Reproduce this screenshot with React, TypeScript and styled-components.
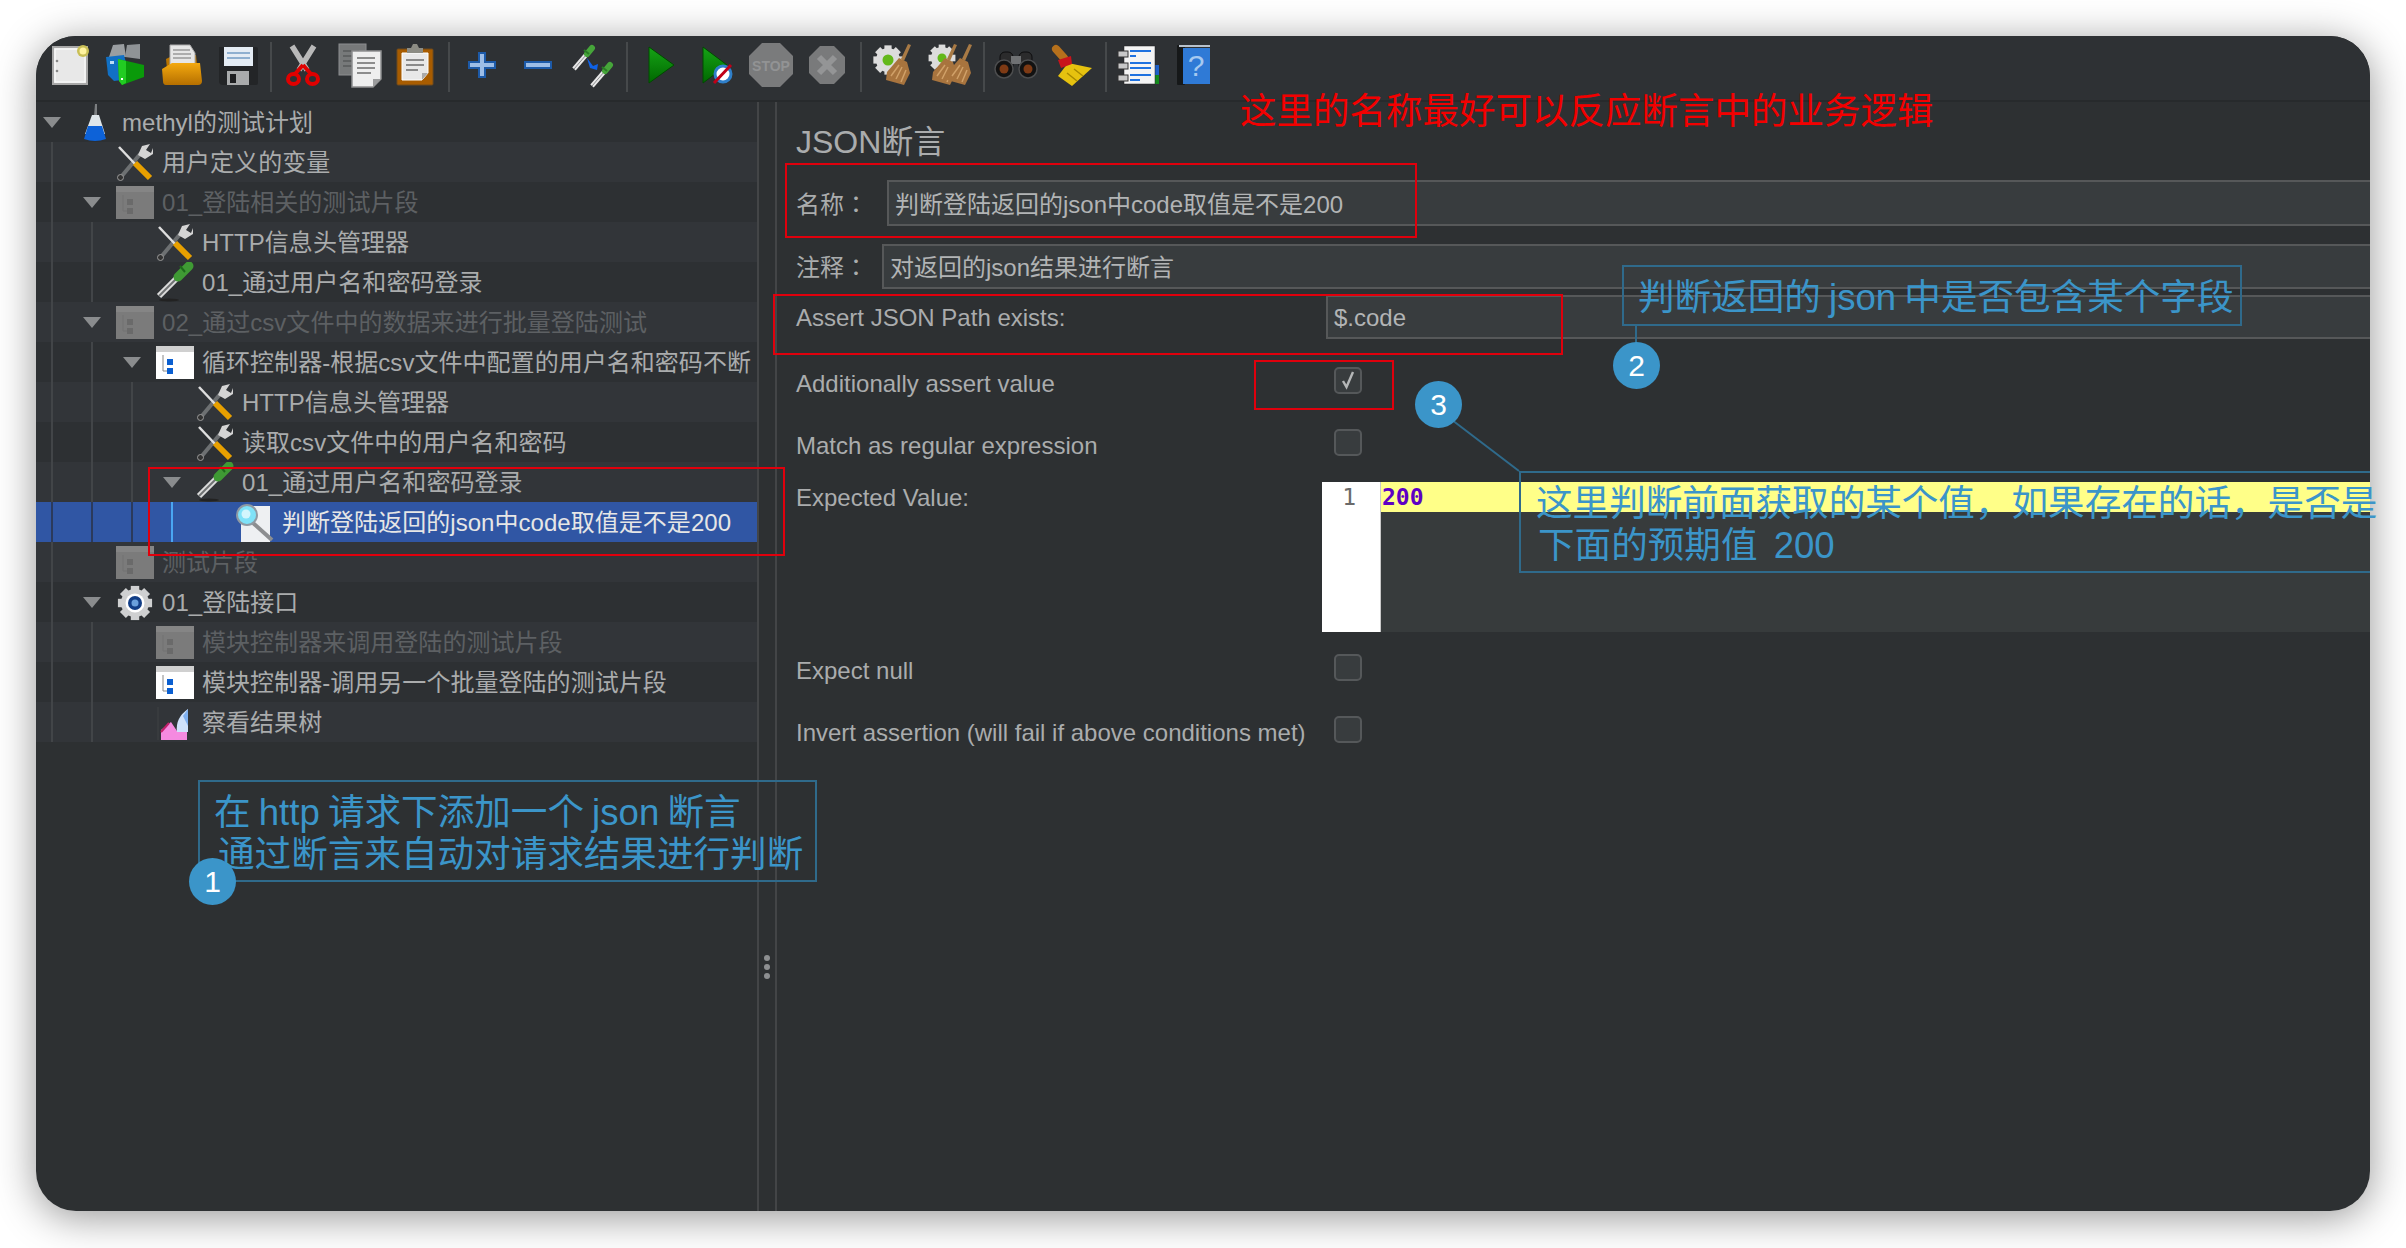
import React from 'react';
import styled, { createGlobalStyle } from 'styled-components';

const GlobalStyle = createGlobalStyle`
  html, body {
    margin: 0;
    padding: 0;
    background: #fff;
    overflow: hidden;
  }
  * {
    box-sizing: border-box;
  }
`;

const SANS = `"Liberation Sans", "Noto Sans CJK SC", sans-serif`;

const Stage = styled.div`
  position: relative;
  width: 2406px;
  height: 1248px;
  padding: 36px 0 0 36px;
  font-family: ${SANS};
  overflow: hidden;
`;

const Window = styled.div`
  width: 2334px;
  height: 1175px;
  display: flex;
  flex-direction: column;
  background: #2d3032;
  border-radius: 40px;
  box-shadow: 0 6px 40px rgba(0, 0, 0, 0.42);
  overflow: hidden;
`;

const Toolbar = styled.div`
  height: 66px;
  flex: none;
  display: flex;
  align-items: center;
  padding: 0 0 6px 6px;
  background: #2e3134;
  border-bottom: 2px solid #272a2c;
`;

const ToolButton = styled.div<{ $w?: number }>`
  width: ${p => p.$w ?? 56}px;
  height: 44px;
  flex: none;
  display: flex;
  justify-content: center;
`;

const ToolSep = styled.div<{ $l: number; $r: number }>`
  width: 2px;
  height: 50px;
  flex: none;
  margin: 4px ${p => p.$r}px 0 ${p => p.$l}px;
  background: #46494b;
`;

const Main = styled.div`
  flex: 1;
  min-height: 0;
  display: flex;
`;

const TreePane = styled.div`
  width: 721px;
  flex: none;
  overflow: hidden;
`;

const Splitter = styled.div`
  width: 20px;
  flex: none;
  display: flex;
  flex-direction: column;
  align-items: center;
  gap: 3px;
  padding-top: 853px;
  border-left: 2px solid #434547;
  border-right: 2px solid #434547;
`;

const SplitDot = styled.span`
  width: 6px;
  height: 6px;
  border-radius: 50%;
  background: #8d8f91;
`;

const Row = styled.div<{ $stripe: boolean; $selected?: boolean }>`
  height: 40px;
  display: flex;
  align-items: center;
  padding-left: 15px;
  white-space: nowrap;
  overflow: hidden;
  background: ${p => (p.$selected ? '#3056a4' : p.$stripe ? '#323539' : '#2d3033')};
`;

const Guide = styled.span<{ $selected?: boolean; $active?: boolean }>`
  width: 40px;
  height: 40px;
  flex: none;
  border-left: 2px solid ${p => (p.$active ? '#4aa6f2' : p.$selected ? '#2b3a5c' : '#424548')};
`;

const Toggle = styled.span`
  width: 20px;
  flex: none;
  margin: 0 13px 0 -9px;
  display: flex;
  justify-content: center;
`;

const Triangle = styled.span`
  width: 0;
  height: 0;
  border-left: 9px solid transparent;
  border-right: 9px solid transparent;
  border-top: 11px solid #8a8c8e;
`;

const NodeIcon = styled.span`
  width: 40px;
  height: 40px;
  flex: none;
  margin-right: 7px;
`;

const NodeText = styled.span<{ $disabled?: boolean; $selected?: boolean }>`
  padding-bottom: 3px;
  font-size: 24px;
  letter-spacing: 0.04px;
  color: ${p => (p.$selected ? '#e6e6e6' : p.$disabled ? '#5d6063' : '#aaacad')};
`;

const FormPane = styled.div`
  flex: 1;
  min-width: 0;
  padding: 22px 0 0 19px;
  color: #aaacad;
  font-size: 24px;
`;

const Title = styled.div`
  height: 36px;
  font-size: 32px;
  line-height: 36px;
`;

const FieldRow = styled.div<{ $top: number; $h: number }>`
  display: flex;
  align-items: center;
  height: ${p => p.$h}px;
  margin-top: ${p => p.$top}px;
`;

const FieldLabel = styled.div<{ $w: number; $shift: number }>`
  width: ${p => p.$w}px;
  flex: none;
  padding-top: ${p => Math.max(0, p.$shift)}px;
  padding-bottom: ${p => Math.max(0, -p.$shift)}px;
`;

const Colon = styled.span`
  font-family: "Noto Sans CJK TC", sans-serif;
`;

const TextInput = styled.div<{ $shift: number }>`
  flex: 1;
  height: 100%;
  display: flex;
  align-items: center;
  padding: ${p => Math.max(0, p.$shift)}px 0 ${p => Math.max(0, -p.$shift)}px 6px;
  background: #383c3e;
  border: 2px solid #565859;
  border-right: none;
  color: #b2b4b5;
`;

const CheckRow = styled.div<{ $top: number }>`
  display: flex;
  align-items: center;
  height: 40px;
  margin-top: ${p => p.$top}px;
`;

const CheckLabel = styled.div`
  width: 538px;
  flex: none;
`;

const CheckBox = styled.div`
  width: 28px;
  height: 27px;
  margin-bottom: 8px;
  display: flex;
  align-items: center;
  justify-content: center;
  background: #383c3e;
  border: 2px solid #55585a;
  border-radius: 5px;
`;

const EditorRow = styled.div`
  display: flex;
  height: 150px;
  margin-top: 16px;
`;

const EditorLabel = styled.div`
  width: 526px;
  flex: none;
  line-height: 32px;
`;

const Gutter = styled.div`
  width: 59px;
  flex: none;
  padding-right: 24px;
  text-align: right;
  background: #fff;
  border-right: 1px solid #c8c8c8;
  color: #6a6a6a;
  font: 23px/30px "DejaVu Sans Mono", monospace;
`;

const CodeArea = styled.div`
  flex: 1;
  background: #373b3c;
`;

const ActiveLine = styled.div`
  height: 30px;
  padding-left: 1px;
  background: #ffff88;
  color: #5e00c4;
  font: bold 23px/30px "DejaVu Sans Mono", monospace;
`;

// annotations drawn over the screenshot
const RedBox = styled.div<{ $x: number; $y: number; $w: number; $h: number }>`
  position: absolute;
  left: ${p => p.$x}px;
  top: ${p => p.$y}px;
  width: ${p => p.$w}px;
  height: ${p => p.$h}px;
  border: 2px solid #e0000c;
  pointer-events: none;
`;

const RedNote = styled.div`
  position: absolute;
  left: 1240px;
  top: 89px;
  font-size: 36.5px;
  line-height: 46px;
  color: #f30000;
  white-space: nowrap;
`;

const BlueBox = styled.div<{ $x: number; $y: number; $w: number; $h: number; $open?: boolean }>`
  position: absolute;
  left: ${p => p.$x}px;
  top: ${p => p.$y}px;
  width: ${p => p.$w}px;
  height: ${p => p.$h}px;
  border: 2px solid #2f6a8b;
  ${p => p.$open && 'border-right: none;'}
`;

const BlueText = styled.div<{ $x: number; $y: number; $gap?: number }>`
  position: absolute;
  left: ${p => p.$x}px;
  top: ${p => p.$y}px;
  font-size: 36.6px;
  line-height: 42px;
  color: #3b95c9;
  white-space: nowrap;
  word-spacing: ${p => p.$gap ?? 0}px;
`;

const Badge = styled.div<{ $x: number; $y: number }>`
  position: absolute;
  left: ${p => p.$x}px;
  top: ${p => p.$y}px;
  width: 47px;
  height: 47px;
  display: flex;
  align-items: center;
  justify-content: center;
  border-radius: 50%;
  background: #3b95c9;
  color: #fff;
  font-size: 30px;
`;

const Leader = styled.svg`
  position: absolute;
  left: 0;
  top: 0;
  pointer-events: none;
`;

const Svg: React.FC<React.PropsWithChildren<{ size?: number }>> = ({ size = 44, children }) => (
  <svg width={size} height={size} viewBox={`0 0 ${size} ${size}`} style={{ overflow: 'visible' }}>
    {children}
  </svg>
);

const NewIcon = () => (
  <Svg>
    <rect x="5" y="4" width="34" height="37" fill="#e4e4e4" stroke="#a8a8a8" strokeWidth="2" />
    <rect x="7" y="6" width="30" height="33" fill="#e8e8e8" stroke="#fff" strokeWidth="1" />
    <circle cx="9" cy="18" r="1.3" fill="#888" />
    <circle cx="9" cy="28" r="1.3" fill="#888" />
    <circle cx="35" cy="8" r="6" fill="#c9bf56" />
    <circle cx="35" cy="8" r="3.5" fill="#fff3a0" />
  </Svg>
);

const TemplatesIcon = () => (
  <Svg>
    <path d="M5 14 L9 2 L20 1 L22 14 Z" fill="#9a9ea1" />
    <path d="M21 14 L23 2 L36 1 L36 16 Z" fill="#8f9396" />
    <path d="M2 14 L20 12 L26 36 L10 38 L4 32 Z" fill="#1170c4" />
    <rect x="6" y="18" width="4" height="3" fill="#bcdcf5" />
    <path d="M14 16 L40 22 L40 34 L18 42 L15 38 Z" fill="#0a9a0a" />
    <path d="M14 16 L22 18 L22 40 L18 42 L15 38 Z" fill="#22cc22" />
    <rect x="17" y="35" width="2" height="2" fill="#fff" />
  </Svg>
);

const OpenIcon = () => (
  <Svg>
    <path d="M6 16 L14 12 L36 12 L38 30 L8 36 Z" fill="#b97400" />
    <path d="M10 2 L30 2 L35 10 L35 24 L10 24 Z" fill="#e6e6e6" stroke="#aaa" strokeWidth="1" />
    <path d="M13 7 H30 M13 11 H31 M13 15 H31" stroke="#999" strokeWidth="1.5" />
    <path d="M2 26 L12 20 L40 20 L42 38 Q42 42 38 42 L6 42 Q3 42 3 38 Z" fill="url(#fold)" />
    <defs>
      <linearGradient id="fold" x1="0" y1="0" x2="0" y2="1">
        <stop offset="0" stopColor="#f4a90f" />
        <stop offset="1" stopColor="#b56f00" />
      </linearGradient>
    </defs>
  </Svg>
);

const SaveIcon = () => (
  <Svg>
    <path d="M3 4 H40 Q42 4 42 6 V40 Q42 42 40 42 H7 Q3 42 3 38 Z" fill="#232527" />
    <rect x="8" y="4" width="29" height="19" fill="#e4ecf4" />
    <path d="M11 10 H34 M11 15 H34" stroke="#8fb0d0" strokeWidth="2" />
    <rect x="11" y="28" width="22" height="14" fill="#a9abac" />
    <rect x="14" y="31" width="6" height="9" fill="#1d1e20" />
  </Svg>
);

const CutIcon = () => (
  <Svg>
    <path d="M11 3 L26 27 M33 3 L18 27" stroke="#b9b9b9" strokeWidth="5.5" />
    <path d="M22 22 L14 31 M22 22 L30 31" stroke="#e00000" strokeWidth="4" />
    <ellipse cx="12.5" cy="36" rx="5.5" ry="5" fill="none" stroke="#e00000" strokeWidth="4" />
    <ellipse cx="31.5" cy="36" rx="5.5" ry="5" fill="none" stroke="#e00000" strokeWidth="4" />
  </Svg>
);

const CopyIcon = () => (
  <Svg>
    <rect x="2" y="1" width="27" height="31" fill="#77797a" stroke="#8c8e8f" />
    <path d="M6 8 H22 M6 13 H22 M6 18 H22 M6 23 H22" stroke="#5f6162" strokeWidth="2" />
    <path d="M15 8 H44 V36 L36 44 H15 Z" fill="#eeeeee" stroke="#8e8f90" strokeWidth="1.5" />
    <path d="M36 44 V36 H44 Z" fill="#9a9b9c" />
    <path d="M20 15 H38 M20 20 H38 M20 25 H38 M20 30 H34" stroke="#8c8c8c" strokeWidth="2" />
  </Svg>
);

const PasteIcon = () => (
  <Svg>
    <rect x="4" y="6" width="36" height="36" rx="1" fill="#a85c00" stroke="#6f4a1d" />
    <path d="M9 10 H35 V30 L29 37 H9 Z" fill="#e8e8e8" stroke="#fff" />
    <path d="M29 37 V30 H35 Z" fill="#aaa" />
    <path d="M13 17 H31 M13 22 H31 M13 27 H25" stroke="#8a8a8a" strokeWidth="2" />
    <path d="M14 10 V5 H18 L20 1 H24 L26 5 H30 V10 Z" fill="#8c8c84" />
  </Svg>
);

const PlusIcon = () => (
  <Svg>
    <path d="M18 9 H26 V18 H36 V26 H26 V35 H18 V26 H8 V18 H18 Z" fill="#1d5aa8" />
    <path d="M20 11 H24 V20 H34 V24 H24 V33 H20 V24 H10 V20 H20 Z" fill="#9dbde6" />
  </Svg>
);

const MinusIcon = () => (
  <Svg>
    <rect x="8" y="18" width="28" height="8" fill="#1d5aa8" />
    <rect x="10" y="20" width="24" height="4" fill="#9dbde6" />
  </Svg>
);

const Dropper: React.FC<{ x: number; y: number }> = ({ x, y }) => (
  <g transform={`translate(${x} ${y})`}>
    <path d="M0 22 L12 8" stroke="#e8e8e8" strokeWidth="4.5" />
    <path d="M0 22 L12 8" stroke="#8a8c8e" strokeWidth="1" />
    <path d="M13 7 L18 1" stroke="#46a53a" strokeWidth="6" strokeLinecap="round" />
    <path d="M15 7 L10 3" stroke="#2a7d25" strokeWidth="2" />
  </g>
);

const AddThinkIcon = () => (
  <Svg>
    <Dropper x={2} y={4} />
    <Dropper x={20} y={21} />
    <path d="M15 15 L21 23 L26 21 L25 27 L18 25 Z" fill="#0f62e8" />
  </Svg>
);

const PlayIcon = () => (
  <Svg>
    <defs>
      <linearGradient id="play" x1="0" y1="0" x2="0" y2="1">
        <stop offset="0" stopColor="#16a316" />
        <stop offset="1" stopColor="#006800" />
      </linearGradient>
    </defs>
    <path d="M10 4 L35 22 L10 40 Z" fill="url(#play)" stroke="#004a00" strokeWidth="1" />
  </Svg>
);

const PlayNoTimerIcon = () => (
  <Svg>
    <path d="M9 4 L33 22 L9 40 Z" fill="url(#play)" stroke="#004a00" strokeWidth="1" />
    <circle cx="29" cy="31" r="8" fill="#fff" stroke="#2f7fc9" strokeWidth="3" />
    <path d="M20 40 L37 22" stroke="#c00018" strokeWidth="3" />
  </Svg>
);

const StopIcon = () => (
  <Svg>
    <path d="M13 0 H31 L44 13 V31 L31 44 H13 L0 31 V13 Z" fill="#7a7b7c" />
    <text x="22" y="28" textAnchor="middle" fontFamily={SANS} fontWeight="700" fontSize="14" fill="#929394">
      STOP
    </text>
  </Svg>
);

const ShutdownIcon = () => (
  <Svg>
    <path d="M16 3 H30 L41 14 V30 L30 41 H16 L5 30 V14 Z" fill="#797a7b" />
    <path d="M15 14 L31 30 M31 14 L15 30" stroke="#949596" strokeWidth="6" />
  </Svg>
);

const GearShape: React.FC<{ cx: number; cy: number; r: number; fill: string }> = ({ cx, cy, r, fill }) => (
  <g fill={fill}>
    <circle cx={cx} cy={cy} r={r} />
    {[0, 45, 90, 135].map(a => (
      <rect
        key={a}
        x={cx - r * 0.3}
        y={cy - r * 1.22}
        width={r * 0.6}
        height={r * 2.44}
        transform={`rotate(${a} ${cx} ${cy})`}
      />
    ))}
  </g>
);

const BroomShape: React.FC<{ x: number }> = ({ x }) => (
  <g transform={`translate(${x} 0)`}>
    <path d="M24 1 L27 2 L20 18 L17 16 Z" fill="#a87a45" />
    <path d="M15 15 L23 19 L26 30 L20 42 L2 37 L3 29 Z" fill="#a8743e" />
    <path d="M7 33 L15 22 M12 36 L18 24 M17 39 L22 27" stroke="#d0a068" strokeWidth="1.5" />
  </g>
);

const ClearIcon = () => (
  <Svg>
    <GearShape cx={19} cy={17} r={12} fill="#dcdcdc" />
    <circle cx="19" cy="17" r="5.5" fill="#63b81a" />
    <BroomShape x={15} />
  </Svg>
);

const ClearAllIcon = () => (
  <Svg>
    <GearShape cx={15} cy={15} r={11} fill="#dcdcdc" />
    <circle cx="15" cy="15" r="4.5" fill="#63b81a" />
    <BroomShape x={3} />
    <BroomShape x={18} />
  </Svg>
);

const FindIcon = () => (
  <Svg>
    <rect x="6" y="9" width="13" height="18" rx="5" fill="#2b2b2c" stroke="#0d0d0e" />
    <rect x="25" y="9" width="13" height="18" rx="5" fill="#2b2b2c" stroke="#0d0d0e" />
    <rect x="17" y="13" width="10" height="8" fill="#6f7173" />
    <circle cx="10" cy="26" r="9" fill="#121212" stroke="#4c4d4e" strokeWidth="1.5" />
    <circle cx="34" cy="26" r="9" fill="#121212" stroke="#4c4d4e" strokeWidth="1.5" />
    <circle cx="10" cy="26" r="4.5" fill="#7e3a14" />
    <circle cx="34" cy="26" r="4.5" fill="#7e3a14" />
  </Svg>
);

const BroomIcon = () => (
  <Svg>
    <path d="M6 6 L14 15" stroke="#b5701c" strokeWidth="8" strokeLinecap="round" />
    <path d="M18 20 L42 25 L22 43 L8 33 Z" fill="#e6c20f" />
    <path d="M8 17 L21 13 L22 21 L11 25 Z" fill="#c8141c" />
    <path d="M17 30 L27 38 M24 26 L33 33" stroke="#a88a00" strokeWidth="1.5" />
  </Svg>
);

const LogIcon = () => (
  <Svg>
    <rect x="38" y="22" width="5" height="10" fill="#1e60c8" />
    <rect x="38" y="32" width="5" height="9" fill="#138a1c" />
    <rect x="8" y="3" width="31" height="38" fill="#f4f4f4" stroke="#222" strokeWidth="0.5" />
    {[8, 20, 32].map(y => (
      <rect key={y} x="2" y={y} width="10" height="6" fill="#c8c8c8" stroke="#333" strokeWidth="1" />
    ))}
    <path d="M14 8 H35 M14 13 H20 M14 20 H35 M14 25 H35 M14 32 H35 M14 37 H24" stroke="#1f72e0" strokeWidth="2" />
  </Svg>
);

const HelpIcon = () => (
  <Svg>
    <rect x="5" y="2" width="8" height="40" rx="1" fill="#161819" />
    <rect x="11" y="5" width="27" height="36" fill="#2f7ad6" />
    <rect x="7" y="2" width="31" height="2" fill="#b9c2cc" />
    <text x="24" y="33" textAnchor="middle" fontFamily={SANS} fontSize="30" fill="#a6c9f0">
      ?
    </text>
  </Svg>
);

// tree node icons, 40x40
const FlaskIcon = () => (
  <Svg size={40}>
    <path d="M20 2 L22 2 L22 14 L19 14 Z" fill="#7b7e80" />
    <path d="M17 13 H24 L30 32 H10 Z" fill="#dfe6ea" />
    <path d="M13 24 H27 L31 37 Q20 41 9 37 Z" fill="#0d62d8" />
  </Svg>
);

const ToolsIcon = () => (
  <Svg size={40}>
    <path d="M6 35 L26 11" stroke="#6d7072" strokeWidth="4" />
    <path d="M4 5 L21 23" stroke="#dedede" strokeWidth="2.5" />
    <path d="M20 21 L35 36" stroke="#e8a000" strokeWidth="6" />
    <circle cx="5.5" cy="35.5" r="3" fill="#333" stroke="#9a9a9a" />
    <path d="M23 13 L27 4 L35 2 L31 8 L36 11 L38 6 L38 12 L30 17 Z" fill="#d4d4d4" />
  </Svg>
);

const FragmentIcon: React.FC<{ enabled?: boolean }> = ({ enabled }) => (
  <Svg size={40}>
    <rect x="1" y="4" width="38" height="33" fill={enabled ? '#fff' : '#7b7b7b'} />
    <rect x="1" y="4" width="38" height="6" fill={enabled ? '#d0d0d0' : '#858585'} />
    <path d="M8 13 V29 H12" stroke={enabled ? '#888' : '#727272'} strokeWidth="1" fill="none" />
    <rect x="12" y="17" width="6" height="6" fill={enabled ? '#0b5fd0' : '#6a6a6a'} />
    <rect x="12" y="26" width="6" height="6" fill={enabled ? '#0b5fd0' : '#6a6a6a'} />
  </Svg>
);

const SamplerIcon = () => (
  <Svg size={40}>
    <path d="M4 34 L24 14" stroke="#dcdcdc" strokeWidth="6" />
    <path d="M4 34 L24 14" stroke="#707274" strokeWidth="2" />
    <path d="M23 15 L34 4" stroke="#3f9a34" strokeWidth="9" strokeLinecap="round" />
    <path d="M30 10 L25 4" stroke="#1f6a1c" strokeWidth="2" />
    <ellipse cx="14" cy="38" rx="10" ry="1.5" fill="#222" />
  </Svg>
);

const AssertionIcon = () => (
  <Svg size={40}>
    <rect x="6" y="4" width="29" height="36" fill="#eef0f2" />
    <path d="M18 21 L37 38" stroke="#8c8e90" strokeWidth="4" />
    <circle cx="12" cy="13" r="10" fill="#7fe2f8" stroke="#8f9aa3" strokeWidth="2" />
    <circle cx="11" cy="12" r="4.5" fill="#d2f6fd" />
  </Svg>
);

const ThreadGroupIcon = () => (
  <Svg size={40}>
    <GearShape cx={20} cy={21} r={14} fill="#cfd0d1" />
    <circle cx="20" cy="21" r="9.5" fill="#fff" />
    <circle cx="20" cy="21" r="7" fill="#123e86" />
    <circle cx="20" cy="21" r="3.5" fill="#6aa0dc" />
  </Svg>
);

const ResultTreeIcon = () => (
  <Svg size={40}>
    <path d="M3 5 V38" stroke="#3f4244" strokeWidth="1" />
    <path d="M6 38 L6 28 L16 20 L22 29 L32 29 L32 38 Z" fill="#f58ae0" />
    <path d="M6 30 L14 21" stroke="#c0206a" strokeWidth="2" />
    <path d="M22 30 Q20 16 33 7 L33 30 Z" fill="#cfe2fb" />
    <path d="M28 14 L33 7 L33 24 Z" fill="#7fb0ef" />
  </Svg>
);

type Node = {
  depth: number;
  label: string;
  icon: React.ReactNode;
  open?: boolean;
  disabled?: boolean;
  selected?: boolean;
};

const NODES: Node[] = [
  { depth: 0, label: 'methyl的测试计划', icon: <FlaskIcon />, open: true },
  { depth: 1, label: '用户定义的变量', icon: <ToolsIcon /> },
  { depth: 1, label: '01_登陆相关的测试片段', icon: <FragmentIcon />, open: true, disabled: true },
  { depth: 2, label: 'HTTP信息头管理器', icon: <ToolsIcon /> },
  { depth: 2, label: '01_通过用户名和密码登录', icon: <SamplerIcon /> },
  { depth: 1, label: '02_通过csv文件中的数据来进行批量登陆测试', icon: <FragmentIcon />, open: true, disabled: true },
  { depth: 2, label: '循环控制器-根据csv文件中配置的用户名和密码不断', icon: <FragmentIcon enabled />, open: true },
  { depth: 3, label: 'HTTP信息头管理器', icon: <ToolsIcon /> },
  { depth: 3, label: '读取csv文件中的用户名和密码', icon: <ToolsIcon /> },
  { depth: 3, label: '01_通过用户名和密码登录', icon: <SamplerIcon />, open: true },
  { depth: 4, label: '判断登陆返回的json中code取值是不是200', icon: <AssertionIcon />, selected: true },
  { depth: 1, label: '测试片段', icon: <FragmentIcon />, disabled: true },
  { depth: 1, label: '01_登陆接口', icon: <ThreadGroupIcon />, open: true },
  { depth: 2, label: '模块控制器来调用登陆的测试片段', icon: <FragmentIcon />, disabled: true },
  { depth: 2, label: '模块控制器-调用另一个批量登陆的测试片段', icon: <FragmentIcon enabled /> },
  { depth: 2, label: '察看结果树', icon: <ResultTreeIcon /> },
];

const Check = () => (
  <svg width="16" height="20" viewBox="0 0 16 20">
    <path d="M3 11 L6.5 17 L13 2" fill="none" stroke="#b4b6b7" strokeWidth="2.4" />
  </svg>
);

const App: React.FC = () => (
  <>
    <GlobalStyle />
    <Stage>
      <Window>
        <Toolbar>
          <ToolButton><NewIcon /></ToolButton>
          <ToolButton><TemplatesIcon /></ToolButton>
          <ToolButton><OpenIcon /></ToolButton>
          <ToolButton><SaveIcon /></ToolButton>
          <ToolSep $l={4} $r={3} />
          <ToolButton><CutIcon /></ToolButton>
          <ToolButton><CopyIcon /></ToolButton>
          <ToolButton><PasteIcon /></ToolButton>
          <ToolSep $l={5} $r={4} />
          <ToolButton><PlusIcon /></ToolButton>
          <ToolButton><MinusIcon /></ToolButton>
          <ToolButton><AddThinkIcon /></ToolButton>
          <ToolSep $l={4} $r={5} />
          <ToolButton $w={55}><PlayIcon /></ToolButton>
          <ToolButton $w={55}><PlayNoTimerIcon /></ToolButton>
          <ToolButton $w={55}><StopIcon /></ToolButton>
          <ToolButton $w={55}><ShutdownIcon /></ToolButton>
          <ToolSep $l={7} $r={0} />
          <ToolButton $w={58}><ClearIcon /></ToolButton>
          <ToolButton $w={58}><ClearAllIcon /></ToolButton>
          <ToolSep $l={5} $r={3} />
          <ToolButton><FindIcon /></ToolButton>
          <ToolButton><BroomIcon /></ToolButton>
          <ToolSep $l={5} $r={3} />
          <ToolButton><LogIcon /></ToolButton>
          <ToolButton><HelpIcon /></ToolButton>
        </Toolbar>
        <Main>
          <TreePane>
            {NODES.map((node, i) => (
              <Row key={i} $stripe={i % 2 === 1} $selected={node.selected}>
                {Array.from({ length: node.depth }, (_, level) => (
                  <Guide key={level} $selected={node.selected} $active={node.selected && level === 3} />
                ))}
                <Toggle>{node.open && <Triangle />}</Toggle>
                <NodeIcon>{node.icon}</NodeIcon>
                <NodeText $disabled={node.disabled} $selected={node.selected}>
                  {node.label}
                </NodeText>
              </Row>
            ))}
          </TreePane>
          <Splitter>
            <SplitDot />
            <SplitDot />
            <SplitDot />
          </Splitter>
          <FormPane>
            <Title>JSON断言</Title>
            <FieldRow $top={20} $h={46}>
              <FieldLabel $w={91} $shift={-2}>名称<Colon>：</Colon></FieldLabel>
              <TextInput $shift={-2}>判断登陆返回的json中code取值是不是200</TextInput>
            </FieldRow>
            <FieldRow $top={18} $h={45}>
              <FieldLabel $w={86} $shift={-2}>注释<Colon>：</Colon></FieldLabel>
              <TextInput $shift={-2}>对返回的json结果进行断言</TextInput>
            </FieldRow>
            <FieldRow $top={6} $h={44}>
              <FieldLabel $w={530} $shift={2}>Assert JSON Path exists:</FieldLabel>
              <TextInput $shift={2}>$.code</TextInput>
            </FieldRow>
            <CheckRow $top={25}>
              <CheckLabel>Additionally assert value</CheckLabel>
              <CheckBox><Check /></CheckBox>
            </CheckRow>
            <CheckRow $top={22}>
              <CheckLabel>Match as regular expression</CheckLabel>
              <CheckBox />
            </CheckRow>
            <EditorRow>
              <EditorLabel>Expected Value:</EditorLabel>
              <Gutter>1</Gutter>
              <CodeArea>
                <ActiveLine>200</ActiveLine>
              </CodeArea>
            </EditorRow>
            <CheckRow $top={19}>
              <CheckLabel>Expect null</CheckLabel>
              <CheckBox />
            </CheckRow>
            <CheckRow $top={22}>
              <CheckLabel>Invert assertion (will fail if above conditions met)</CheckLabel>
              <CheckBox />
            </CheckRow>
          </FormPane>
        </Main>
      </Window>

      <RedNote>这里的名称最好可以反应断言中的业务逻辑</RedNote>
      <RedBox $x={785} $y={163} $w={632} $h={75} />
      <RedBox $x={773} $y={294} $w={790} $h={61} />
      <RedBox $x={1254} $y={360} $w={140} $h={50} />
      <RedBox $x={148} $y={467} $w={637} $h={89} />

      <Leader width="2406" height="1248">
        <path d="M1636 326 V345 M1452 420 L1519 471" stroke="#2f6a8b" strokeWidth="2" fill="none" />
      </Leader>

      <BlueBox $x={198} $y={780} $w={619} $h={102} />
      <BlueText $x={214} $y={792} $gap={-2}>在 http 请求下添加一个 json 断言</BlueText>
      <BlueText $x={218} $y={834}>通过断言来自动对请求结果进行判断</BlueText>
      <Badge $x={189} $y={858}>1</Badge>

      <BlueBox $x={1622} $y={265} $w={620} $h={61} />
      <BlueText $x={1638} $y={277} $gap={-2}>判断返回的 json 中是否包含某个字段</BlueText>
      <Badge $x={1613} $y={342}>2</Badge>

      <BlueBox $x={1519} $y={471} $w={851} $h={102} $open />
      <BlueText $x={1536} $y={483}>这里判断前面获取的某个值，如果存在的话，是否是</BlueText>
      <BlueText $x={1538} $y={525} $gap={6}>下面的预期值 200</BlueText>
      <Badge $x={1415} $y={381}>3</Badge>
    </Stage>
  </>
);

export default App;
